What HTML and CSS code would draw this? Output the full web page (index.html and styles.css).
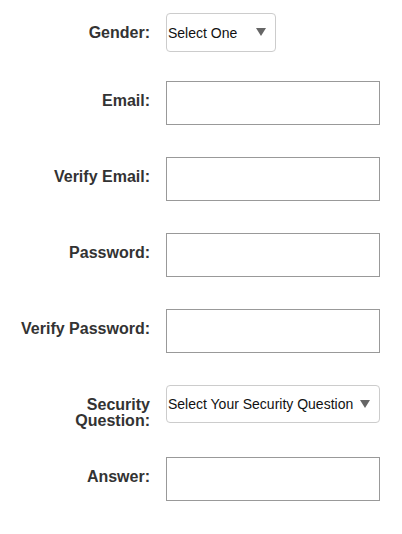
FILE: index.html
```html
<!DOCTYPE html>
<html>
<head>
<meta charset="utf-8">
<link rel="stylesheet" href="styles.css">
</head>
<body>
<form class="form">
  <div class="row row-select">
    <label class="label" for="gender">Gender:</label>
    <span class="select-wrap select-short">
      <select id="gender" class="select"><option>Select One</option></select>
    </span>
  </div>
  <div class="row">
    <label class="label" for="email">Email:</label>
    <input id="email" class="input" type="text">
  </div>
  <div class="row">
    <label class="label" for="email2">Verify Email:</label>
    <input id="email2" class="input" type="text">
  </div>
  <div class="row">
    <label class="label" for="pw">Password:</label>
    <input id="pw" class="input" type="password">
  </div>
  <div class="row">
    <label class="label" for="pw2">Verify Password:</label>
    <input id="pw2" class="input" type="password">
  </div>
  <div class="row row-select row-tall">
    <label class="label" for="sq">Security Question:</label>
    <span class="select-wrap select-long">
      <select id="sq" class="select"><option>Select Your Security Question</option></select>
    </span>
  </div>
  <div class="row">
    <label class="label" for="ans">Answer:</label>
    <input id="ans" class="input" type="text">
  </div>
</form>
</body>
</html>
```

FILE: styles.css
```css
html, body {
  margin: 0;
  padding: 0;
  background: #ffffff;
}

body {
  font-family: "Liberation Sans", Arial, Helvetica, sans-serif;
  padding-top: 13px;
}

.form {
  display: flex;
  flex-direction: column;
}

.row {
  display: flex;
  align-items: flex-start;
  gap: 16px;
  margin-bottom: 32px;
}

.row-select {
  margin-bottom: 29px;
}

.row-tall {
  margin-bottom: 28px;
}

.label {
  box-sizing: border-box;
  width: 134px;
  margin-left: 16px;
  padding-top: 12px;
  text-align: right;
  font-weight: bold;
  font-size: 16px;
  line-height: 16px;
  color: #333333;
}

.input {
  box-sizing: border-box;
  width: 214px;
  height: 44px;
  margin: 0;
  padding: 0 6px;
  border: 1px solid #999999;
  border-radius: 0;
  background: #ffffff;
  font-family: inherit;
  font-size: 14px;
}

.select-wrap {
  position: relative;
  display: block;
  height: 39px;
}

.select-short {
  width: 110px;
}

.select-long {
  width: 214px;
  height: 38px;
}

.select-wrap::after {
  content: "";
  position: absolute;
  right: 10px;
  top: 15px;
  width: 0;
  height: 0;
  border-left: 5px solid transparent;
  border-right: 5px solid transparent;
  border-top: 8px solid #666666;
  pointer-events: none;
}

.select {
  -webkit-appearance: none;
  appearance: none;
  box-sizing: border-box;
  width: 100%;
  height: 100%;
  margin: 0;
  padding: 0 0 0 1px;
  border: 1px solid #cccccc;
  border-radius: 4px;
  background: #ffffff;
  font-family: inherit;
  font-size: 14px;
  color: #111111;
  outline: none;
}
```
